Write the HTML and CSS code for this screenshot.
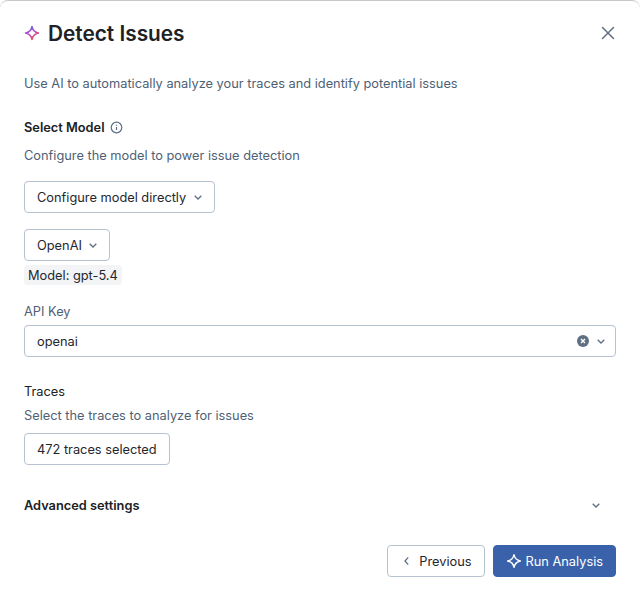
FILE: index.html
```html
<!DOCTYPE html>
<html lang="en">

<head>
  <meta charset="UTF-8">
  <meta name="viewport" content="width=device-width, initial-scale=1.0">
  <title>Detect Issues</title>
  <link rel="stylesheet" href="styles.css">
</head>

<body>
  <div class="dialog">
    <div class="dialog-header">
      <h2>
        <svg class="sparkle" width="16" height="16" viewBox="0 0 16 16" fill="none">
          <defs>
            <linearGradient id="spark" x1="0" y1="0" x2="0.5" y2="1">
              <stop offset="0" stop-color="#4a6ff0" />
              <stop offset="0.5" stop-color="#b04fd0" />
              <stop offset="1" stop-color="#ef4a6a" />
            </linearGradient>
          </defs>
          <path d="M8 1.6 Q9 6.9 14.4 8 Q9 9.1 8 14.4 Q7 9.1 1.6 8 Q7 6.9 8 1.6 Z" stroke="url(#spark)" stroke-width="1.7" stroke-linejoin="round" />
        </svg>
        Detect Issues
      </h2>
      <svg class="close" width="16" height="16" viewBox="0 0 16 16" fill="none">
        <path d="M2.5 2.5 L13.5 13.5 M13.5 2.5 L2.5 13.5" stroke="#5f6f84" stroke-width="1.5" stroke-linecap="round" />
      </svg>
    </div>

    <p class="intro">Use AI to automatically analyze your traces and identify potential issues</p>

    <div class="section-title">
      Select Model
      <svg width="13" height="13" viewBox="0 0 14 14" fill="none">
        <circle cx="7" cy="7" r="5.7" stroke="#5f6f84" stroke-width="1.3" />
        <path d="M7 6.4 V9.8 M7 4 V5" stroke="#5f6f84" stroke-width="1.3" />
      </svg>
    </div>
    <p class="hint hint-model">Configure the model to power issue detection</p>

    <button class="btn select-btn" type="button">
      Configure model directly
      <svg width="8" height="5" viewBox="0 0 8 5" fill="none"><path d="M0.7 0.7 L4 4 L7.3 0.7" stroke="#5f6f84" stroke-width="1.3" /></svg>
    </button>

    <button class="btn select-btn provider" type="button">
      OpenAI
      <svg width="8" height="5" viewBox="0 0 8 5" fill="none"><path d="M0.7 0.7 L4 4 L7.3 0.7" stroke="#5f6f84" stroke-width="1.3" /></svg>
    </button>

    <div><span class="badge">Model: gpt-5.4</span></div>

    <label class="field-label">API Key</label>
    <div class="combo">
      <span>openai</span>
      <span class="combo-icons">
        <svg width="14" height="14" viewBox="0 0 14 14"><circle cx="7" cy="7" r="6" fill="#5f6f84" /><path d="M5 5 L9 9 M9 5 L5 9" stroke="#fff" stroke-width="1.4" /></svg>
        <svg width="8" height="5" viewBox="0 0 8 5" fill="none"><path d="M0.7 0.7 L4 4 L7.3 0.7" stroke="#5f6f84" stroke-width="1.3" /></svg>
      </span>
    </div>

    <div class="traces-title">Traces</div>
    <p class="hint hint-traces">Select the traces to analyze for issues</p>
    <button class="btn traces-btn" type="button">472 traces selected</button>

    <div class="advanced">
      <span>Advanced settings</span>
      <svg width="8" height="5" viewBox="0 0 8 5" fill="none"><path d="M0.7 0.7 L4 4 L7.3 0.7" stroke="#5f6f84" stroke-width="1.3" /></svg>
    </div>

    <div class="footer">
      <button class="btn btn-prev" type="button">
        <svg width="6" height="10" viewBox="0 0 6 10" fill="none"><path d="M5.2 1.4 L2 5 L5.2 8.6" stroke="#5f6f84" stroke-width="1.3" /></svg>
        Previous
      </button>
      <button class="btn btn-run" type="button">
        <svg width="16" height="16" viewBox="0 0 16 16" fill="none"><path d="M8 1.6 Q9 6.9 14.4 8 Q9 9.1 8 14.4 Q7 9.1 1.6 8 Q7 6.9 8 1.6 Z" stroke="#fff" stroke-width="1.4" stroke-linejoin="round" /></svg>
        Run Analysis
      </button>
    </div>
  </div>
</body>

</html>
```

FILE: styles.css
```css
html,
body {
  height: 100%;
}

body {
  margin: 0;
  background-color: #fff;
  font-family: Inter, "Liberation Sans", sans-serif;
  font-size: 12.8px;
  color: #1f272e;
}

.dialog {
  box-sizing: border-box;
  height: 604px;
  padding: 20px 24px 0;
  border-top: 1px solid #c9c9c9;
  border-radius: 8px 8px 0 0;
}

.dialog-header {
  display: flex;
  justify-content: space-between;
  align-items: center;
  height: 24px;
}

.dialog-header h2 {
  display: flex;
  align-items: center;
  gap: 8px;
  margin: 0;
  font-size: 20.8px;
  font-weight: 600;
  color: #202124;
}

.intro {
  margin: 28px 0 0;
  height: 20px;
  line-height: 22px;
  color: #4f5f75;
}

.section-title {
  display: flex;
  align-items: center;
  gap: 5px;
  margin-top: 24px;
  height: 20px;
  font-weight: 600;
  color: #202124;
}

.hint {
  margin: 0;
  height: 20px;
  line-height: 22px;
  color: #4f5f75;
}

.hint-model {
  margin-top: 8px;
}

.hint-traces {
  margin-top: 4px;
}

.btn {
  display: flex;
  align-items: center;
  box-sizing: border-box;
  height: 32px;
  padding: 0 12px;
  background-color: #fff;
  border: 1px solid #b7c2d0;
  border-radius: 4px;
  font-family: inherit;
  font-size: 12.8px;
  color: #1f272e;
}

.select-btn {
  gap: 8px;
  margin-top: 16px;
}

.provider {
  gap: 7px;
}

.traces-btn {
  margin-top: 8px;
}

.badge {
  display: inline-block;
  margin-top: 4px;
  height: 20px;
  line-height: 22px;
  padding: 0 4px;
  background-color: #f3f4f6;
  border-radius: 4px;
  color: #1f272e;
}

.field-label {
  display: block;
  margin-top: 16px;
  height: 20px;
  line-height: 22px;
  color: #4f5f75;
}

.combo {
  display: flex;
  justify-content: space-between;
  align-items: center;
  box-sizing: border-box;
  height: 32px;
  margin-top: 4px;
  padding: 0 10px 0 12px;
  border: 1px solid #b7c2d0;
  border-radius: 4px;
}

.combo-icons {
  display: flex;
  align-items: center;
  gap: 7px;
}

.traces-title {
  margin-top: 24px;
  height: 20px;
  line-height: 22px;
  color: #202124;
}

.advanced {
  display: flex;
  justify-content: space-between;
  align-items: center;
  height: 20px;
  margin-top: 30px;
  padding-right: 16px;
  font-weight: 600;
  color: #202124;
}

.footer {
  display: flex;
  justify-content: flex-end;
  gap: 8px;
  margin-top: 30px;
}

.btn-prev {
  gap: 10px;
  padding: 0 12px 0 15px;
}

.btn-run {
  gap: 4px;
  background-color: #3a62ab;
  border-color: #3a62ab;
  color: #fff;
}
```
